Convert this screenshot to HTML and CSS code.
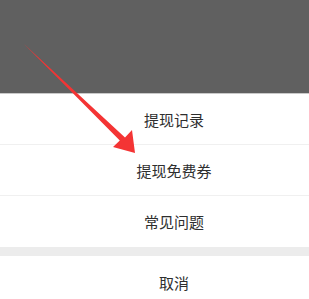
FILE: index.html
```html
<!DOCTYPE html>
<html lang="zh-CN">
<head>
  <meta charset="UTF-8">
  <title>提现</title>
  <link rel="stylesheet" href="styles.css">
</head>
<body>

<div class="screen">
  <!-- 遮罩 -->
  <div class="mask"></div>

  <!-- 底部菜单 -->
  <div class="action-sheet">
    <div class="sheet-item">提现记录</div>
    <div class="sheet-item">提现免费券</div>
    <div class="sheet-item">常见问题</div>
    <div class="sheet-gap"></div>
    <div class="sheet-item cancel">取消</div>
  </div>

  <!-- 标注箭头 -->
  <svg class="arrow" width="309" height="299" viewBox="0 0 309 299">
    <polygon points="24,44 125,137.5 132,130 135,153 113,147 119.8,140.5" fill="#f43434"/>
  </svg>
</div>

</body>
</html>
```

FILE: styles.css
```css
* {
  box-sizing: border-box;
  font-family: "Noto Sans CJK SC", "Noto Sans", sans-serif;
}
body {
  margin: 0;
  background-color: #fff;
}
.screen {
  width: 309px;
  height: 299px;
  position: relative;
  overflow: hidden;
}
.mask {
  height: 94px;
  background-color: #606060;
  border-bottom: 1px solid #c9c9c9;
}
.action-sheet {
  background-color: #fff;
}
.sheet-item {
  height: 51px;
  padding-left: 39px;
  display: flex;
  align-items: center;
  justify-content: center;
  font-size: 15px;
  color: #2e2e2e;
  border-bottom: 1px solid #f0f0f0;
}
.sheet-item:nth-child(3) {
  height: 51px;
  border-bottom: none;
}
.sheet-gap {
  height: 9px;
  background-color: #ececec;
}
.sheet-item.cancel {
  height: 52px;
  border-bottom: none;
}
.arrow {
  position: absolute;
  left: 0;
  top: 0;
}
```
